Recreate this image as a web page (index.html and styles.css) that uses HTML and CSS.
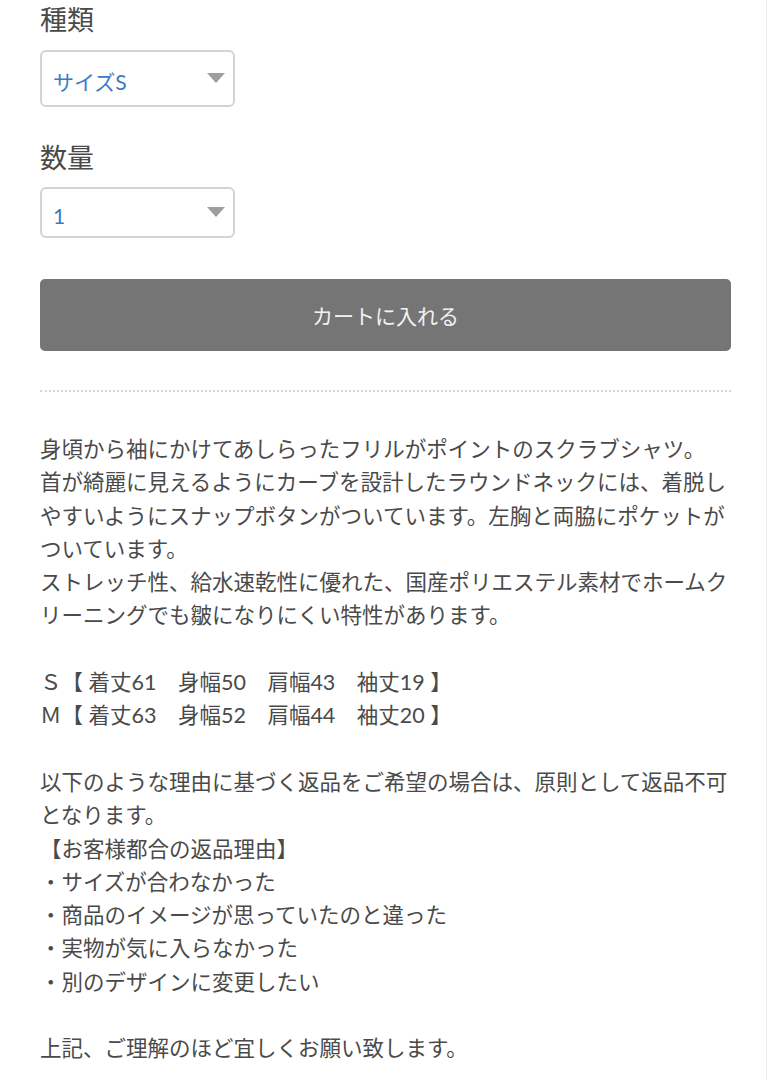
FILE: index.html
```html
<!DOCTYPE html>
<html lang="ja">

<head>
    <meta charset="UTF-8">
    <meta name="viewport" content="width=device-width, initial-scale=1.0">
    <title>スクラブシャツ</title>
    <link rel="stylesheet" href="styles.css">
</head>

<body>
    <div class="page">
        <form class="cart-form">
            <label class="field-label" for="variant">種類</label>
            <div class="select-wrap select-tall">
                <select id="variant" class="select">
                    <option>サイズS</option>
                    <option>サイズM</option>
                </select>
            </div>

            <label class="field-label" for="quantity">数量</label>
            <div class="select-wrap">
                <select id="quantity" class="select">
                    <option>1</option>
                    <option>2</option>
                    <option>3</option>
                </select>
            </div>

            <button type="button" class="cart-btn">カートに入れる</button>
        </form>

        <hr class="divider">

        <div class="description">
            <p>身頃から袖にかけてあしらったフリルがポイントのスクラブシャツ。<br>
                首が綺麗に見えるようにカーブを設計したラウンドネックには、着脱しやすいようにスナップボタンがついています。左胸と両脇にポケットがついています。<br>
                ストレッチ性、給水速乾性に優れた、国産ポリエステル素材でホームクリーニングでも皺になりにくい特性があります。</p>

            <p>Ｓ【 着丈61　身幅50　肩幅43　袖丈19 】<br>
                Ｍ【 着丈63　身幅52　肩幅44　袖丈20 】</p>

            <p>以下のような理由に基づく返品をご希望の場合は、原則として返品不可となります。<br>
                【お客様都合の返品理由】<br>
                ・サイズが合わなかった<br>
                ・商品のイメージが思っていたのと違った<br>
                ・実物が気に入らなかった<br>
                ・別のデザインに変更したい</p>

            <p>上記、ご理解のほど宜しくお願い致します。</p>
        </div>
    </div>
</body>

</html>
```

FILE: styles.css
```css
body {
    font-family: Lato, "Noto Sans CJK JP", sans-serif;
    margin: 0;
    padding: 0;
    background-color: #fff;
    color: #4a4a4a;
}

.page {
    width: 691px;
    padding: 0 35px 0 40px;
    border-right: 1px solid #ececec;
    min-height: 1080px;
}

.cart-form {
    display: flex;
    flex-direction: column;
    align-items: flex-start;
}

.field-label {
    font-size: 27px;
    line-height: 40px;
    color: #4a4a4a;
    margin-bottom: 10px;
}

.select-wrap + .field-label {
    margin-top: 31px;
    margin-bottom: 9px;
}

.select-wrap {
    position: relative;
    width: 195px;
    height: 51px;
}

.select-tall {
    height: 57px;
}

/* grey triangle standing in for the native arrow */
.select-wrap::after {
    content: "";
    position: absolute;
    right: 10px;
    top: 50%;
    margin-top: -6px;
    border-left: 9px solid transparent;
    border-right: 9px solid transparent;
    border-top: 10px solid #9e9e9e;
    pointer-events: none;
}

.select {
    appearance: none;
    -webkit-appearance: none;
    width: 100%;
    height: 100%;
    box-sizing: border-box;
    border: 2px solid #d4d4d4;
    border-radius: 6px;
    background: #fff;
    color: #3b7bc6;
    font-family: Lato, "Noto Sans CJK JP", sans-serif;
    font-size: 21px;
    padding: 5px 40px 0 11px;
    outline: none;
}

.cart-btn {
    width: 100%;
    height: 72px;
    margin-top: 41px;
    border: none;
    border-radius: 5px;
    background-color: #757575;
    color: #f2f2f2;
    font-family: Lato, "Noto Sans CJK JP", sans-serif;
    font-size: 21px;
    cursor: pointer;
}

.divider {
    border: none;
    border-top: 2px dotted #d6d6d6;
    margin: 39px 0 0;
    height: 0;
}

.description {
    padding-top: 41px;
    font-size: 21.5px;
    line-height: 33.3px;
}

.description p {
    margin: 0 0 33.3px;
}
```
